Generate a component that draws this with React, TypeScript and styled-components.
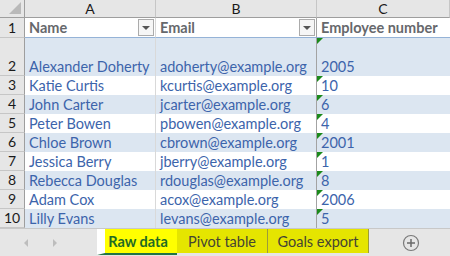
import React from 'react';
import styled, { createGlobalStyle, css } from 'styled-components';

const GlobalStyle = createGlobalStyle`
  html, body {
    margin: 0;
    padding: 0;
    background: #ffffff;
  }
  body {
    font-family: Lato, "Liberation Sans", Arial, sans-serif;
    width: 450px;
    height: 256px;
    overflow: hidden;
  }
`;

interface Employee {
  name: string;
  email: string;
  number: string;
}

const employees: Employee[] = [
  { name: 'Alexander Doherty', email: 'adoherty@example.org', number: '2005' },
  { name: 'Katie Curtis', email: 'kcurtis@example.org', number: '10' },
  { name: 'John Carter', email: 'jcarter@example.org', number: '6' },
  { name: 'Peter Bowen', email: 'pbowen@example.org', number: '4' },
  { name: 'Chloe Brown', email: 'cbrown@example.org', number: '2001' },
  { name: 'Jessica Berry', email: 'jberry@example.org', number: '1' },
  { name: 'Rebecca Douglas', email: 'rdouglas@example.org', number: '8' },
  { name: 'Adam Cox', email: 'acox@example.org', number: '2006' },
  { name: 'Lilly Evans', email: 'levans@example.org', number: '5' },
];

const Window = styled.div`
  width: 450px;
  height: 256px;
  display: flex;
  flex-direction: column;
  overflow: hidden;
`;

const Sheet = styled.div`
  display: grid;
  grid-template-columns: 25px 131px 161px 133px;
  grid-template-rows: 18px 20px 38px repeat(8, 19px);
  height: 228px;
  overflow: hidden;
`;

const Corner = styled.div`
  position: relative;
  background: #e6e6e6;
  border-right: 1px solid #9e9e9e;
  border-bottom: 1px solid #9e9e9e;
  box-sizing: border-box;

  &::after {
    content: '';
    position: absolute;
    right: 3px;
    bottom: 3px;
    width: 0;
    height: 0;
    border-left: 12px solid transparent;
    border-bottom: 12px solid #b9b9b9;
  }
`;

const ColLetter = styled.div`
  background: #e6e6e6;
  border-right: 1px solid #c6c6c6;
  border-bottom: 1px solid #9e9e9e;
  box-sizing: border-box;
  display: flex;
  align-items: center;
  justify-content: center;
  font-size: 14px;
  color: #1a1a1a;
`;

const RowNum = styled.div`
  background: #e6e6e6;
  border-right: 1px solid #9e9e9e;
  border-bottom: 1px solid #c6c6c6;
  box-sizing: border-box;
  display: flex;
  align-items: flex-end;
  justify-content: center;
  padding-bottom: 1px;
  font-size: 14px;
  color: #1a1a1a;
`;

const Cell = styled.div<{ $band?: boolean; $head?: boolean; $edge?: 'light' | 'dark' | 'none' }>`
  position: relative;
  box-sizing: border-box;
  background: ${p => (p.$band ? '#dce6f1' : '#ffffff')};
  display: flex;
  align-items: flex-end;
  padding: 0 0 1px 4px;
  font-size: 14.5px;
  white-space: nowrap;
  overflow: hidden;
  color: #3c64ab;
  border-right: ${p =>
    p.$edge === 'dark' ? '1px solid #a3a3a3' : p.$edge === 'light' ? '1px solid #d9d9d9' : 'none'};
  ${p =>
    p.$head &&
    css`
      font-weight: 700;
      color: #66686c;
      border-bottom: 1px solid #95b3d7;
    `}
`;

const NumberFlag = styled.span`
  position: absolute;
  left: 0;
  top: 0;
  width: 0;
  height: 0;
  border-top: 6px solid #1b8a1b;
  border-right: 6px solid transparent;
`;

const FilterButton = styled.span`
  position: absolute;
  right: 1px;
  top: 1px;
  width: 16px;
  height: 17px;
  box-sizing: border-box;
  border: 1px solid #ababab;
  background: #f6f6f6;
  display: flex;
  align-items: center;
  justify-content: center;

  &::after {
    content: '';
    width: 0;
    height: 0;
    border-left: 4px solid transparent;
    border-right: 4px solid transparent;
    border-top: 4px solid #555;
  }
`;

const TabBar = styled.div`
  height: 28px;
  background: #e6e6e6;
  border-top: 1px solid #c8c8c8;
  box-sizing: border-box;
  display: flex;
  align-items: flex-start;
`;

const NavArrows = styled.div`
  width: 97px;
  height: 27px;
  display: flex;
  align-items: center;
  gap: 25px;
  padding-left: 24px;
  box-sizing: border-box;
`;

const Arrow = styled.span<{ $dir: 'left' | 'right' }>`
  width: 0;
  height: 0;
  border-top: 4px solid transparent;
  border-bottom: 4px solid transparent;
  ${p =>
    p.$dir === 'left'
      ? css`border-right: 4px solid #bdbdbd;`
      : css`border-left: 4px solid #bdbdbd;`}
`;

const Tab = styled.div<{ $active?: boolean; $w: number }>`
  width: ${p => p.$w}px;
  height: ${p => (p.$active ? 26 : 24)}px;
  box-sizing: border-box;
  display: flex;
  align-items: center;
  justify-content: center;
  font-size: 14.5px;
  ${p =>
    p.$active
      ? css`
          background: #ffff00;
          border-left: 8px solid #ffffff;
          border-bottom: 2px solid #217346;
          color: #1e6b24;
          font-weight: 700;
          padding-right: 6px;
        `
      : css`
          background: #e5e500;
          color: #444433;
          border-right: 1px solid #9c9c3a;
        `}
`;

const Spacer = styled.div`
  flex: 1;
  height: 27px;
  display: flex;
  align-items: center;
  padding-left: 33px;
`;

const AddSheet = () => (
  <svg width="18" height="18" viewBox="0 0 18 18">
    <circle cx="9" cy="9" r="7.5" fill="none" stroke="#7a7a7a" strokeWidth="1.2" />
    <path d="M9 5v8M5 9h8" stroke="#6a6a6a" strokeWidth="1.5" />
  </svg>
);

export default function App() {
  return (
    <>
      <GlobalStyle />
      <Window>
        <Sheet>
          <Corner />
          <ColLetter>A</ColLetter>
          <ColLetter>B</ColLetter>
          <ColLetter>C</ColLetter>

          <RowNum>1</RowNum>
          <Cell $head $edge="light">
            Name
            <FilterButton />
          </Cell>
          <Cell $head $edge="dark">
            Email
            <FilterButton />
          </Cell>
          <Cell $head $edge="none">
            Employee number
          </Cell>

          {employees.map((e, i) => {
            const band = i % 2 === 0;
            return (
              <React.Fragment key={e.email}>
                <RowNum>{i + 2}</RowNum>
                <Cell $band={band} $edge="light">
                  {e.name}
                </Cell>
                <Cell $band={band} $edge="dark">
                  {e.email}
                </Cell>
                <Cell $band={band} $edge="none">
                  <NumberFlag />
                  {e.number}
                </Cell>
              </React.Fragment>
            );
          })}
        </Sheet>

        <TabBar>
          <NavArrows>
            <Arrow $dir="left" />
            <Arrow $dir="right" />
          </NavArrows>
          <Tab $active $w={80}>Raw data</Tab>
          <Tab $w={91}>Pivot table</Tab>
          <Tab $w={101}>Goals export</Tab>
          <Spacer>
            <AddSheet />
          </Spacer>
        </TabBar>
      </Window>
    </>
  );
}
